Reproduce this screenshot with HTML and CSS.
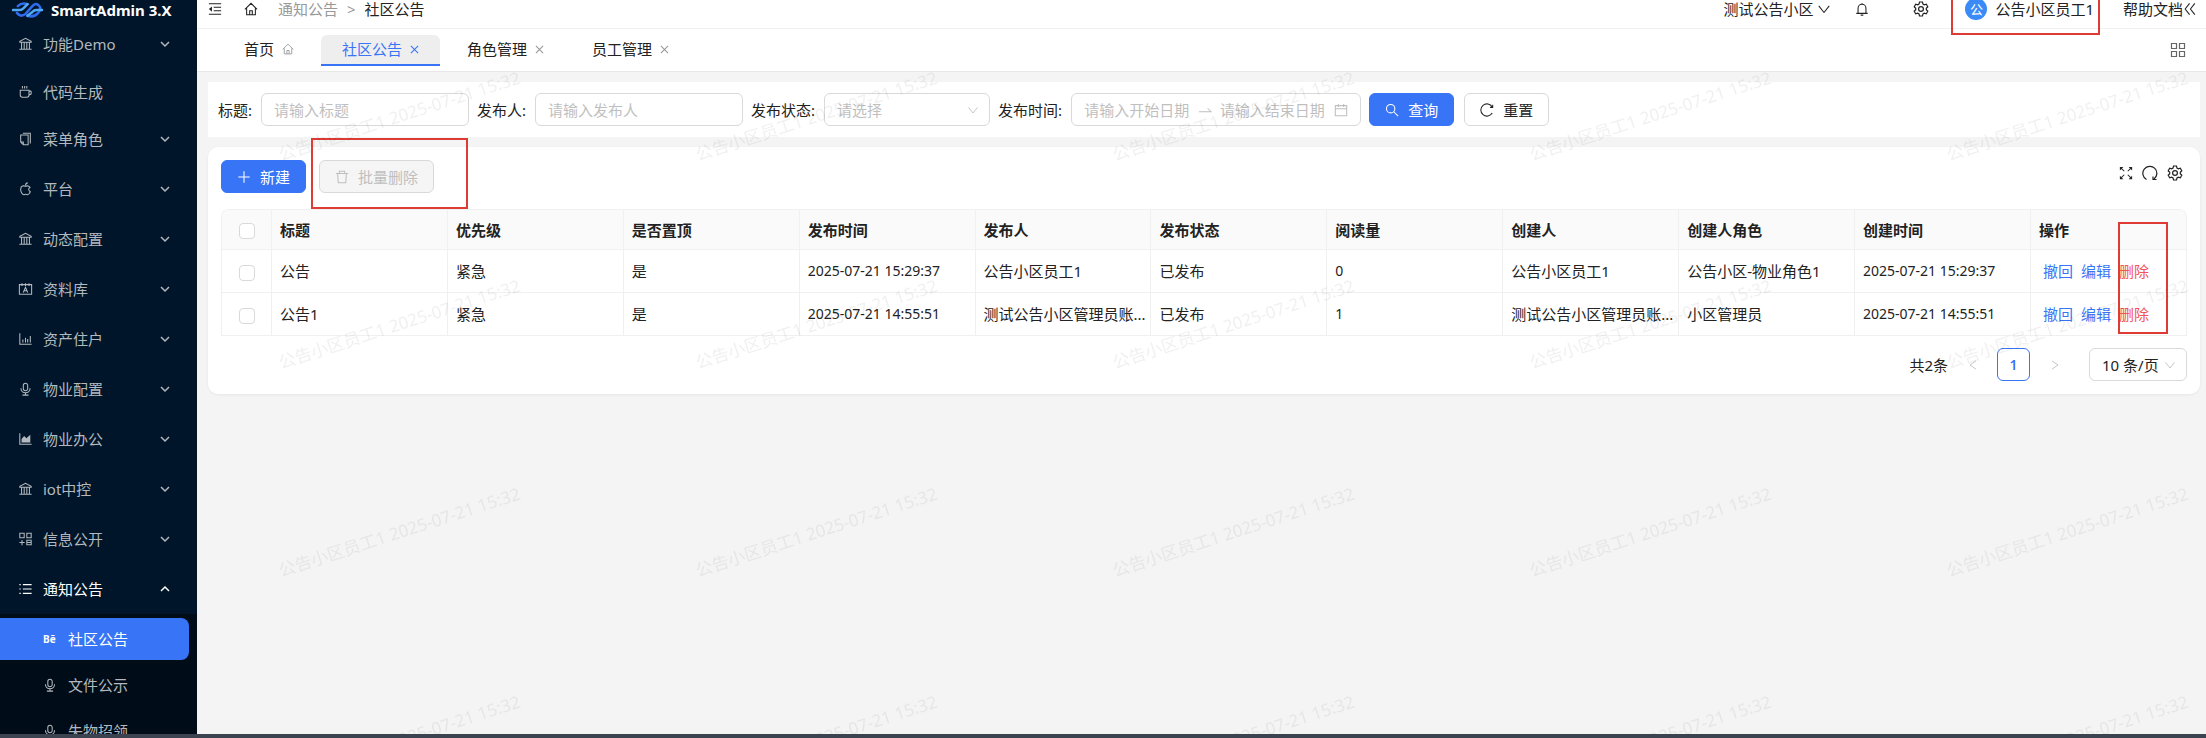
FILE: index.html
```html
<!DOCTYPE html>
<html lang="zh-CN">
  <head>
    <meta charset="UTF-8" />
    <meta name="viewport" content="width=device-width, initial-scale=1.0" />
    <title>社区公告 - SmartAdmin 3.X</title>
    <link rel="stylesheet" href="styles.css">
  </head>
  <body>
    <!-- icons -->
    <svg class="sprite" aria-hidden="true">
      <symbol id="i-bank" viewBox="0 0 16 16"><path d="M1.500 6V5L8 1.500 14.500 5v1zM3.500 6v7.500M6.500 6v7.500M9.500 6v7.500M12.500 6v7.500M1 14h14" /></symbol>
      <symbol id="i-coffee" viewBox="0 0 16 16"><path d="M2 6h10v5.500q0 2.500-2.500 2.500h-5Q2 14 2 11.500zM12 7h1.500q1 0 1 1v1.500q0 1.500-1.500 1.500h-1M4.500 1v3M7 1v3M9.500 1v3" /></symbol>
      <symbol id="i-copy" viewBox="0 0 16 16"><path d="M5 1.500h8.500v11.500M2.500 3.500h8.500v11H5.500l-3-3zM2.500 11.500h3v3" /></symbol>
      <symbol id="i-apple" viewBox="0 0 16 16"><path d="M8 5C6 4 2.500 4 2.500 8.500c0 3 2 6 3.500 6 1 0 1.200-.5 2.200-.5s1.300.5 2.200.5c1.200 0 2.400-1.500 3.100-3.300-2.300-1-2.500-4-.3-5.200C11.700 4.300 9.700 4.200 8 5zM8 4c0-1.500 1-2.800 2.500-3" /></symbol>
      <symbol id="i-card" viewBox="0 0 16 16"><path d="M1 3h14v11H1zM4 1.500v3M8 1.500v3M12 1.500v3M5.500 12 8 6l2.500 6M6.500 10h3" /></symbol>
      <symbol id="i-bar" viewBox="0 0 16 16"><path d="M1.500 1.500v12.500H15M5 12V8.500M8 12V6.500M10.500 12V8M13.500 12V4.500" /></symbol>
      <symbol id="i-audio" viewBox="0 0 16 16"><path d="M5.500 4a2.500 2.500 0 0 1 5 0v3.500a2.500 2.500 0 0 1-5 0zM2.800 7.200a5.200 5.200 0 0 0 10.400 0M8 12.400V15M4.500 15h7" /></symbol>
      <symbol id="i-area" viewBox="0 0 16 16"><path d="M1.500 1.500v12.500H15" /><path class="fill" d="M3.500 12V8l3-3.500L9 7l4.500-4v9z" /></symbol>
      <symbol id="i-appadd" viewBox="0 0 16 16"><path d="M1.500 1.500h5v5h-5zM9.500 1.500h5v5h-5zM9.500 9.500h5v5h-5zM4 9v6M1 12h6M9.500 12h5" /></symbol>
      <symbol id="i-list" viewBox="0 0 16 16"><path d="M5 3h10M5 8h10M5 13h10M1 3h1.500M1 8h1.500M1 13h1.500" /></symbol>
      <symbol id="i-down" viewBox="0 0 16 16"><path d="M2 4.500 8 12l6-7.500" /></symbol>
      <symbol id="i-arrow" viewBox="0 0 10 10"><path d="M1 3l4 4 4-4" /></symbol>
      <symbol id="i-left" viewBox="0 0 16 16"><path d="M12 2.500 4 8l8 5.500" /></symbol>
      <symbol id="i-right" viewBox="0 0 16 16"><path d="M4 2.500 12 8l-8 5.500" /></symbol>
      <symbol id="i-fold" viewBox="0 0 16 16"><path d="M1 2h14M6.500 6H15M6.500 10H15M1 14h14" /><path class="fill" d="M4.500 5v6L1 8z" /></symbol>
      <symbol id="i-home" viewBox="0 0 16 16"><path d="M1 8.500 8 1.500l7 7M3 7v7.500h10V7M6.500 14.500V10h3v4.500" /></symbol>
      <symbol id="i-bell" viewBox="0 0 16 16"><path d="M3.500 13V7a4.500 4.500 0 0 1 9 0v6M1.500 13h13M8 1v1.500M6.500 15h3" /></symbol>
      <symbol id="i-gear" viewBox="0 0 16 16"><path d="M6.500 1h3L10 3.100l1.300.7 2-.6 1.500 2.600-1.500 1.400v1.600l1.500 1.400-1.500 2.600-2-.6-1.300.7-.5 2.100h-3L6 12.900l-1.300-.7-2 .6-1.500-2.600 1.500-1.400V7.200L1.200 5.800l1.500-2.600 2 .6L6 3.100z" /><circle cx="8" cy="8" r="2.400" /></symbol>
      <symbol id="i-dleft" viewBox="0 0 16 16"><path d="M7.500 1.500 2.500 8l5 6.500M13.500 1.500 8.500 8l5 6.500" /></symbol>
      <symbol id="i-close" viewBox="0 0 10 10"><path d="M1 1l8 8M9 1 1 9" /></symbol>
      <symbol id="i-apps" viewBox="0 0 16 16"><path d="M1.500 1.500h5v5h-5zM9.500 1.500h5v5h-5zM1.500 9.500h5v5h-5zM9.500 9.500h5v5h-5z" /></symbol>
      <symbol id="i-swap" viewBox="0 0 16 16"><path d="M1 10h14l-4-4" /></symbol>
      <symbol id="i-calendar" viewBox="0 0 16 16"><path d="M1.500 3h13v11.500h-13zM1.500 6.500h13M5 1v3.500M11 1v3.500" /></symbol>
      <symbol id="i-search" viewBox="0 0 16 16"><circle cx="6.500" cy="6.500" r="4.800" /><path d="M10 10l5 5" /></symbol>
      <symbol id="i-reload" viewBox="0 0 16 16"><path d="M14 4.500a7 7 0 1 0 0 7M14.500 2v3h-3" /></symbol>
      <symbol id="i-plus" viewBox="0 0 16 16"><path d="M8 1.500v13M1.500 8h13" /></symbol>
      <symbol id="i-trash" viewBox="0 0 16 16"><path d="M1 4h14M3 4l.7 10.500h8.600L13 4M5 4V1.500h6V4" /></symbol>
      <symbol id="i-full" viewBox="0 0 16 16"><path d="M1.500 1.500 6 6M14.500 1.500 10 6M1.500 14.500 6 10M14.500 14.500 10 10" /><path class="fill" d="M1 1h4L1 5zM15 1h-4l4 4zM1 15h4l-4-4zM15 15h-4l4-4z" /></symbol>
      <symbol id="i-redo" viewBox="0 0 16 16"><path d="M4.500 14.500a7 7 0 1 1 7.500-.5M11 11.500V14.500h3.500" /></symbol>
    </svg>

    <div class="app">
      <aside class="sidebar">
        <div class="logo">
          <svg class="logo-mark" viewBox="0 0 32 20">
            <path class="logo-deep" d="M6 6q4-4 10-2M5 13q4 5 9 1l7-8q4-5 8 1 1 3-2 6-4 5-11 3" />
            <path class="logo-light" d="M1 10h7q2 0 4-2l4-4M31 10h-6q-2 0-4 2l-5 4" />
          </svg>
          <span>SmartAdmin 3.X</span>
        </div>
        <nav>
          <ul class="menu">
            <li><a href="#"><svg class="icon"><use href="#i-bank" /></svg><span>功能Demo</span><svg class="arrow"><use href="#i-arrow" /></svg></a></li>
            <li class="leaf"><a href="#"><svg class="icon"><use href="#i-coffee" /></svg><span>代码生成</span></a></li>
            <li><a href="#"><svg class="icon"><use href="#i-copy" /></svg><span>菜单角色</span><svg class="arrow"><use href="#i-arrow" /></svg></a></li>
            <li><a href="#"><svg class="icon"><use href="#i-apple" /></svg><span>平台</span><svg class="arrow"><use href="#i-arrow" /></svg></a></li>
            <li><a href="#"><svg class="icon"><use href="#i-bank" /></svg><span>动态配置</span><svg class="arrow"><use href="#i-arrow" /></svg></a></li>
            <li><a href="#"><svg class="icon"><use href="#i-card" /></svg><span>资料库</span><svg class="arrow"><use href="#i-arrow" /></svg></a></li>
            <li><a href="#"><svg class="icon"><use href="#i-bar" /></svg><span>资产住户</span><svg class="arrow"><use href="#i-arrow" /></svg></a></li>
            <li><a href="#"><svg class="icon"><use href="#i-audio" /></svg><span>物业配置</span><svg class="arrow"><use href="#i-arrow" /></svg></a></li>
            <li><a href="#"><svg class="icon"><use href="#i-area" /></svg><span>物业办公</span><svg class="arrow"><use href="#i-arrow" /></svg></a></li>
            <li><a href="#"><svg class="icon"><use href="#i-bank" /></svg><span>iot中控</span><svg class="arrow"><use href="#i-arrow" /></svg></a></li>
            <li><a href="#"><svg class="icon"><use href="#i-appadd" /></svg><span>信息公开</span><svg class="arrow"><use href="#i-arrow" /></svg></a></li>
            <li class="open"><a href="#"><svg class="icon"><use href="#i-list" /></svg><span>通知公告</span><svg class="arrow"><use href="#i-arrow" /></svg></a></li>
          </ul>
          <ul class="submenu">
            <li class="active"><a href="#"><b class="icon behance">Bē</b><span>社区公告</span></a></li>
            <li><a href="#"><svg class="icon"><use href="#i-audio" /></svg><span>文件公示</span></a></li>
            <li><a href="#"><svg class="icon"><use href="#i-audio" /></svg><span>失物招领</span></a></li>
          </ul>
        </nav>
      </aside>

      <div class="layout">
        <header class="header">
          <button class="icon-btn" aria-label="收起菜单"><svg class="icon"><use href="#i-fold" /></svg></button>
          <a class="home-link" href="#" aria-label="首页"><svg class="icon"><use href="#i-home" /></svg></a>
          <nav class="breadcrumb">
            <a href="#">通知公告</a>
            <span>&gt;</span>
            <strong>社区公告</strong>
          </nav>
          <div class="header-right">
            <button class="community">测试公告小区<svg class="icon"><use href="#i-down" /></svg></button>
            <button class="icon-btn bell" aria-label="消息"><svg class="icon"><use href="#i-bell" /></svg></button>
            <button class="icon-btn setting" aria-label="设置"><svg class="icon large"><use href="#i-gear" /></svg></button>
            <div class="user">
              <span class="avatar">公</span>
              <span>公告小区员工1</span>
              <i class="mark mark-user"></i>
            </div>
            <a class="help" href="#">帮助文档<svg class="icon"><use href="#i-dleft" /></svg></a>
          </div>
        </header>

        <nav class="tabs">
          <a class="tab" href="#">首页<svg class="icon small"><use href="#i-home" /></svg></a>
          <a class="tab active" href="#">社区公告<svg class="icon close"><use href="#i-close" /></svg></a>
          <a class="tab" href="#">角色管理<svg class="icon close"><use href="#i-close" /></svg></a>
          <a class="tab" href="#">员工管理<svg class="icon close"><use href="#i-close" /></svg></a>
          <button class="icon-btn tabs-more" aria-label="标签操作"><svg class="icon large"><use href="#i-apps" /></svg></button>
        </nav>

        <main class="content">
          <form class="search">
            <div class="field">
              <label for="title">标题:</label>
              <input class="control" id="title" type="text" placeholder="请输入标题" />
            </div>
            <div class="field">
              <label for="publisher">发布人:</label>
              <input class="control" id="publisher" type="text" placeholder="请输入发布人" />
            </div>
            <div class="field">
              <label for="status">发布状态:</label>
              <div class="select status">
                <select class="control" id="status">
                  <option>请选择</option>
                </select>
                <svg class="icon small"><use href="#i-down" /></svg>
              </div>
            </div>
            <div class="field">
              <label for="begin">发布时间:</label>
              <div class="control range">
                <input id="begin" type="text" placeholder="请输入开始日期" />
                <svg class="icon"><use href="#i-swap" /></svg>
                <input type="text" placeholder="请输入结束日期" aria-label="结束日期" />
                <svg class="icon"><use href="#i-calendar" /></svg>
              </div>
            </div>
            <div class="search-btns">
              <button class="btn primary" type="button"><svg class="icon"><use href="#i-search" /></svg>查询</button>
              <button class="btn" type="reset"><svg class="icon"><use href="#i-reload" /></svg>重置</button>
            </div>
          </form>

          <section class="card">
            <div class="toolbar">
              <button class="btn primary"><svg class="icon"><use href="#i-plus" /></svg>新建</button>
              <div class="batch">
                <button class="btn" disabled><svg class="icon"><use href="#i-trash" /></svg>批量删除</button>
                <i class="mark mark-batch"></i>
              </div>
              <div class="tools">
                <button class="icon-btn" aria-label="全屏"><svg class="icon"><use href="#i-full" /></svg></button>
                <button class="icon-btn" aria-label="刷新"><svg class="icon large"><use href="#i-redo" /></svg></button>
                <button class="icon-btn" aria-label="列设置"><svg class="icon large"><use href="#i-gear" /></svg></button>
              </div>
            </div>

            <table class="table">
              <colgroup>
                <col class="col-check" />
                <col span="10" />
                <col class="col-action" />
              </colgroup>
              <thead>
                <tr>
                  <th class="check"><input type="checkbox" aria-label="全选" /></th>
                  <th>标题</th>
                  <th>优先级</th>
                  <th>是否置顶</th>
                  <th>发布时间</th>
                  <th>发布人</th>
                  <th>发布状态</th>
                  <th>阅读量</th>
                  <th>创建人</th>
                  <th>创建人角色</th>
                  <th>创建时间</th>
                  <th class="action-head">操作<i class="mark mark-delete"></i></th>
                </tr>
              </thead>
              <tbody>
                <tr>
                  <td class="check"><input type="checkbox" aria-label="选择 公告" /></td>
                  <td>公告</td>
                  <td>紧急</td>
                  <td>是</td>
                  <td class="time">2025-07-21 15:29:37</td>
                  <td>公告小区员工1</td>
                  <td>已发布</td>
                  <td class="time">0</td>
                  <td>公告小区员工1</td>
                  <td>公告小区-物业角色1</td>
                  <td class="time">2025-07-21 15:29:37</td>
                  <td><div class="actions"><a href="#">撤回</a><a href="#">编辑</a><a class="danger" href="#">删除</a></div></td>
                </tr>
                <tr>
                  <td class="check"><input type="checkbox" aria-label="选择 公告1" /></td>
                  <td>公告1</td>
                  <td>紧急</td>
                  <td>是</td>
                  <td class="time">2025-07-21 14:55:51</td>
                  <td>测试公告小区管理员账...</td>
                  <td>已发布</td>
                  <td class="time">1</td>
                  <td>测试公告小区管理员账...</td>
                  <td>小区管理员</td>
                  <td class="time">2025-07-21 14:55:51</td>
                  <td><div class="actions"><a href="#">撤回</a><a href="#">编辑</a><a class="danger" href="#">删除</a></div></td>
                </tr>
              </tbody>
            </table>

            <div class="pagination">
              <span>共2条</span>
              <button class="page" aria-label="上一页"><svg class="icon small"><use href="#i-left" /></svg></button>
              <button class="page current">1</button>
              <button class="page" aria-label="下一页"><svg class="icon small"><use href="#i-right" /></svg></button>
              <div class="select size">
                <select class="control" aria-label="每页条数">
                  <option>10 条/页</option>
                </select>
                <svg class="icon small"><use href="#i-down" /></svg>
              </div>
            </div>
          </section>

          <svg class="watermark" aria-hidden="true">
            <defs>
              <pattern id="wm" width="417" height="208" patternUnits="userSpaceOnUse">
                <text x="84" y="89" transform="rotate(-18 84 89)">公告小区员工1 2025-07-21 15:32</text>
              </pattern>
            </defs>
            <rect width="100%" height="100%" fill="url(#wm)" />
          </svg>
        </main>
      </div>
    </div>
    <div class="taskbar"></div>
  </body>
</html>
```

FILE: styles.css
```css
:root {
  --primary: #3875f6;
  --danger: #f25555;
  --text: #222;
  --muted: #999;
  --placeholder: #bfbfbf;
  --border: #d9d9d9;
  --line: #f0f0f0;
  --mark: #dd3b34;
}

*,
*::before,
*::after {
  box-sizing: border-box;
}

body {
  display: flex;
  flex-direction: column;
  height: 100vh;
  margin: 0;
  overflow: hidden;
  background-color: #f4f4f4;
  color: var(--text);
  font-family: "Noto Sans", "Noto Sans CJK SC", sans-serif;
  font-size: 15px;
  line-height: 20px;
}

ul {
  list-style: none;
  margin: 0;
  padding: 0;
}

a {
  color: inherit;
  text-decoration: none;
}

button,
input,
select {
  font: inherit;
  color: inherit;
}

button {
  padding: 0;
  border: none;
  background: none;
  cursor: pointer;
}

.sprite {
  position: absolute;
  width: 0;
  height: 0;
}

.icon {
  flex: none;
  width: 14px;
  height: 14px;
}

.icon.small {
  width: 12px;
  height: 12px;
}

.icon.large {
  width: 16px;
  height: 16px;
}

.icon.close {
  width: 9px;
  height: 9px;
}

svg {
  fill: none;
  stroke: currentColor;
  stroke-width: 1.2;
}

svg .fill {
  fill: currentColor;
  stroke: none;
}

.icon-btn {
  display: flex;
}

.app {
  display: flex;
  flex: 1;
  min-height: 0;
}

.taskbar {
  height: 4px;
  background-color: #3b4351;
}

/* sidebar */
.sidebar {
  flex: none;
  width: 197px;
  overflow: hidden;
  background-color: #001529;
  color: #b3b9bf;
}

.logo {
  display: flex;
  align-items: center;
  gap: 8px;
  height: 19px;
  padding-left: 12px;
  color: #fff;
  font-weight: 700;
}

.logo-mark {
  width: 31px;
  height: 20px;
  stroke-linecap: round;
  stroke-width: 2.6;
}

.logo-light {
  stroke: #4fa8f5;
}

.logo-deep {
  stroke: #2f6cf0;
}

.menu a {
  display: flex;
  align-items: center;
  gap: 10px;
  height: 50px;
  padding: 0 27px 0 18px;
}

.menu .leaf a {
  height: 45px;
}

.menu .icon {
  width: 15px;
}

.arrow {
  width: 10px;
  height: 10px;
  margin-left: auto;
  stroke-width: 1.5;
}

.open {
  color: #fff;
}

.open .arrow {
  transform: rotate(180deg);
}

.submenu {
  display: flex;
  flex-direction: column;
  gap: 4px;
  padding: 4px 8px 4px 0;
  background-color: #000c17;
}

.submenu a {
  display: flex;
  align-items: center;
  gap: 11px;
  height: 42px;
  padding-left: 43px;
}

.submenu .active {
  border-radius: 0 8px 8px 0;
  background-color: var(--primary);
  color: #fff;
}

.behance {
  font-size: 10px;
  line-height: 14px;
}

/* header */
.layout {
  display: flex;
  flex: 1;
  flex-direction: column;
  min-width: 0;
}

.header {
  display: flex;
  align-items: center;
  height: 29px;
  padding: 0 9px 10px 11px;
  border-bottom: 1px solid var(--line);
  background-color: #fff;
}

.home-link {
  display: flex;
  margin-left: 22px;
}

.breadcrumb {
  display: flex;
  gap: 9px;
  margin-left: 20px;
  color: var(--muted);
}

.breadcrumb strong {
  color: var(--text);
  font-weight: 400;
}

.header-right {
  display: flex;
  align-items: center;
  margin-left: auto;
}

.community {
  display: flex;
  align-items: center;
  gap: 4px;
}

.bell {
  margin-left: 24px;
}

.setting {
  margin-left: 44px;
}

.user {
  position: relative;
  display: flex;
  align-items: center;
  gap: 8px;
  margin-left: 36px;
}

.avatar {
  width: 22px;
  height: 22px;
  border-radius: 50%;
  background-color: #3a8bf8;
  color: #fff;
  font-size: 13px;
  line-height: 22px;
  text-align: center;
}

.help {
  display: flex;
  align-items: center;
  margin-left: 29px;
}

/* page tabs */
.tabs {
  display: flex;
  align-items: center;
  gap: 6px;
  height: 43px;
  padding: 0 20px 0 26px;
  border-bottom: 1px solid #e8e8e8;
  background-color: #fff;
}

.tab {
  display: flex;
  align-items: center;
  gap: 8px;
  height: 31px;
  padding: 0 21px;
  border-bottom: 2px solid transparent;
}

.tab .icon {
  color: var(--muted);
}

.tab.active {
  border-color: var(--primary);
  border-radius: 6px 6px 0 0;
  background-color: #eee;
  color: var(--primary);
}

.tab.active .icon {
  color: var(--primary);
}

.tabs-more {
  margin-left: auto;
  color: #666;
}

/* content */
.content {
  position: relative;
  flex: 1;
  padding: 10px 6px 0 11px;
}

.search {
  display: flex;
  flex-wrap: wrap;
  gap: 8px;
  padding: 11px 10px;
  background-color: #fff;
}

.field {
  display: flex;
  align-items: center;
  gap: 9px;
}

.control {
  width: 208px;
  height: 33px;
  padding: 0 12px;
  border: 1px solid var(--border);
  border-radius: 6px;
  background-color: #fff;
}

::placeholder {
  color: var(--placeholder);
  opacity: 1;
}

.select {
  display: grid;
  align-items: center;
}

.select > * {
  grid-area: 1 / 1;
}

.select select {
  width: 100%;
  appearance: none;
}

.select .icon {
  justify-self: end;
  margin-right: 11px;
  color: var(--placeholder);
  pointer-events: none;
}

.status {
  width: 166px;
  color: var(--placeholder);
}

.range {
  display: flex;
  align-items: center;
  justify-content: space-between;
  width: 290px;
  color: var(--placeholder);
}

.range input {
  width: 107px;
  padding: 0;
  border: none;
  background: none;
}

.search-btns {
  display: flex;
  gap: 10px;
}

.btn {
  display: flex;
  align-items: center;
  gap: 9px;
  height: 33px;
  padding: 0 15px;
  border: 1px solid var(--border);
  border-radius: 6px;
  background-color: #fff;
}

.btn.primary {
  border-color: var(--primary);
  background-color: var(--primary);
  color: #fff;
}

.btn:disabled {
  background-color: #f5f5f5;
  color: var(--placeholder);
}

.card {
  margin-top: 10px;
  padding: 13px;
  border-radius: 10px;
  background-color: #fff;
  box-shadow: 0 1px 3px rgba(0, 0, 0, 0.06);
}

.toolbar {
  display: flex;
  align-items: flex-start;
  gap: 13px;
  margin-bottom: 16px;
}

.batch {
  position: relative;
}

.tools {
  display: flex;
  align-items: center;
  gap: 9px;
  height: 26px;
  margin-left: auto;
  padding-right: 4px;
}

.table {
  width: 100%;
  table-layout: fixed;
  border-collapse: separate;
  border-spacing: 0;
  border: 1px solid var(--line);
  border-right: none;
  border-bottom: none;
  border-radius: 8px 8px 0 0;
}

.col-check {
  width: 50px;
}

.col-action {
  width: 156px;
}

.table th,
.table td {
  height: 43px;
  padding: 0 8px;
  border-right: 1px solid var(--line);
  border-bottom: 1px solid var(--line);
  text-align: left;
  white-space: nowrap;
}

.table th {
  height: 40px;
  background-color: #fafafa;
  font-weight: 600;
}

.table th:first-child {
  border-top-left-radius: 8px;
}

.table th:last-child {
  border-top-right-radius: 8px;
}

.table .time {
  font-size: 14px;
}

.table .check {
  padding: 0;
  text-align: center;
}

.check input {
  width: 16px;
  height: 16px;
  margin: 0;
  border: 1px solid var(--border);
  border-radius: 4px;
  background-color: #fff;
  vertical-align: middle;
  appearance: none;
}

.action-head {
  position: relative;
}

.actions {
  display: flex;
  gap: 8px;
  padding-left: 4px;
  color: var(--primary);
}

.actions .danger {
  color: var(--danger);
}

.pagination {
  display: flex;
  align-items: center;
  justify-content: flex-end;
  gap: 8px;
  margin-top: 12px;
}

.page {
  display: flex;
  align-items: center;
  justify-content: center;
  width: 33px;
  height: 33px;
  border-radius: 6px;
  color: var(--placeholder);
}

.page.current {
  border: 1px solid var(--primary);
  color: var(--primary);
  font-size: 14px;
  font-weight: 600;
}

.size {
  width: 98px;
  margin-left: 10px;
}

/* red frames */
.mark {
  position: absolute;
  border: 2px solid var(--mark);
  pointer-events: none;
}

.mark-user {
  top: -8px;
  right: -6px;
  bottom: -15px;
  left: -14px;
}

.mark-batch {
  top: -22px;
  right: -34px;
  bottom: -16px;
  left: -8px;
}

.mark-delete {
  top: 12px;
  left: 87px;
  width: 50px;
  height: 112px;
}

.watermark {
  position: absolute;
  top: 0;
  left: 0;
  width: 100%;
  height: 100%;
  stroke: none;
  pointer-events: none;
}

.watermark text {
  fill: rgba(0, 0, 0, 0.06);
  font-size: 17px;
}
```
